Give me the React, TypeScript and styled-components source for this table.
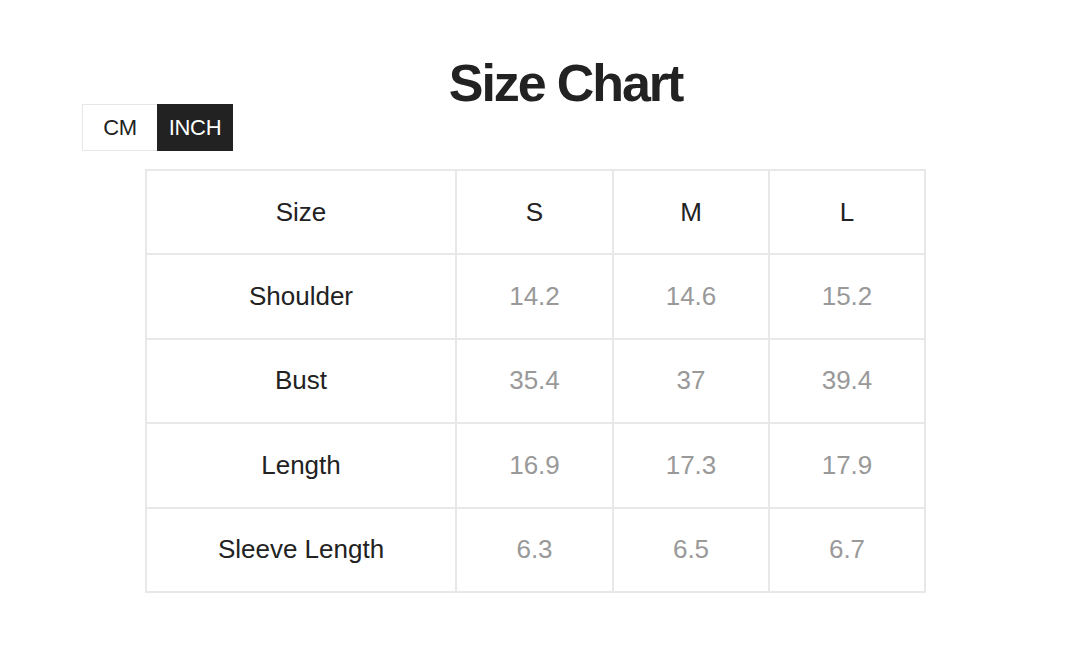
import React from "react";
import styled, { createGlobalStyle } from "styled-components";

const Global = createGlobalStyle`
  html, body { margin: 0; padding: 0; background: #ffffff; }
  body { font-family: "Liberation Sans", Arial, sans-serif; }
`;

const Page = styled.div`
  width: 1069px;
  height: 647px;
  box-sizing: border-box;
  padding-top: 55px;
  display: flex;
  flex-direction: column;
`;

const Title = styled.h1`
  margin: 0;
  padding-left: 62px;
  text-align: center;
  font-family: "Liberation Sans", Arial, sans-serif;
  font-weight: 700;
  font-size: 52px;
  line-height: 56px;
  letter-spacing: -2.1px;
  color: #222222;
`;

const Toggle = styled.div`
  display: flex;
  margin-left: 82px;
  margin-top: -7px;
  height: 47px;
`;

const ToggleButton = styled.div<{ $active?: boolean }>`
  width: 75px;
  box-sizing: border-box;
  display: flex;
  align-items: center;
  justify-content: center;
  font-size: 22px;
  letter-spacing: -0.3px;
  color: ${(p) => (p.$active ? "#ffffff" : "#222222")};
  background: ${(p) => (p.$active ? "#222222" : "#ffffff")};
  border: 1px solid ${(p) => (p.$active ? "#222222" : "#e6e6e6")};
  ${(p) => (p.$active ? "width: 76px;" : "border-right: none;")}
`;

const Table = styled.div`
  margin: 18px 0 0 145px;
  width: 781px;
  display: grid;
  grid-template-columns: 310px 157px 156px 156px;
  border-top: 2px solid #e8e8e8;
  border-left: 2px solid #e8e8e8;
  box-sizing: border-box;
`;

const Cell = styled.div<{ $muted?: boolean }>`
  height: 84.4px;
  box-sizing: border-box;
  border-right: 2px solid #e8e8e8;
  border-bottom: 2px solid #e8e8e8;
  display: flex;
  align-items: center;
  justify-content: center;
  font-size: 26px;
  color: ${(p) => (p.$muted ? "#999999" : "#222222")};
`;

const rows: [string, string, string, string][] = [
  ["Shoulder", "14.2", "14.6", "15.2"],
  ["Bust", "35.4", "37", "39.4"],
  ["Length", "16.9", "17.3", "17.9"],
  ["Sleeve Length", "6.3", "6.5", "6.7"],
];

export default function App() {
  return (
    <Page>
      <Global />
      <Title>Size Chart</Title>
      <Toggle>
        <ToggleButton>CM</ToggleButton>
        <ToggleButton $active>INCH</ToggleButton>
      </Toggle>
      <Table>
        <Cell>Size</Cell>
        <Cell>S</Cell>
        <Cell>M</Cell>
        <Cell>L</Cell>
        {rows.map((r) => (
          <React.Fragment key={r[0]}>
            <Cell>{r[0]}</Cell>
            <Cell $muted>{r[1]}</Cell>
            <Cell $muted>{r[2]}</Cell>
            <Cell $muted>{r[3]}</Cell>
          </React.Fragment>
        ))}
      </Table>
    </Page>
  );
}
